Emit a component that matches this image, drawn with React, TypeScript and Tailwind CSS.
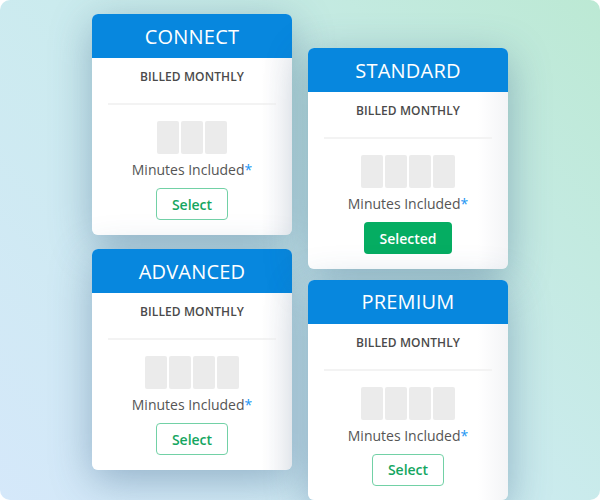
import React from "react";

type Plan = { name: string; boxes: number; selected?: boolean };

function Card({ plan }: { plan: Plan }) {
  return (
    <div className="w-[200px] rounded-[6px] overflow-hidden bg-[linear-gradient(90deg,#ffffff_0%,#ffffff_85%,#f3f4f6_100%)] shadow-[0_10px_40px_rgba(50,90,130,0.4)]">
      <div className="h-[44px] pt-[1px] bg-[#0787de] flex items-center justify-center text-white text-[20px] font-medium leading-none tracking-[0.2px]">
        {plan.name}
      </div>
      <div className="flex flex-col items-center pt-[10px] pb-[15px]">
        <div className="text-[12px] leading-[18px] font-semibold text-[#4a4a4a] tracking-[0.1px]">
          BILLED MONTHLY
        </div>
        <div className="mt-[17px] h-[2px] w-[168px] bg-[#f3f3f3]" />
        <div className="mt-[16px] flex gap-[2px]">
          {Array.from({ length: plan.boxes }).map((_, i) => (
            <div key={i} className="w-[22px] h-[33px] rounded-[2px] bg-[#ebebeb]" />
          ))}
        </div>
        <div className="mt-[6px] text-[14px] leading-[20px] text-[#555]">
          Minutes Included<span className="text-[#2196f3]">*</span>
        </div>
        {plan.selected ? (
          <button className="mt-[8px] h-[32px] w-[88px] rounded-[4px] bg-[#05ad62] text-white text-[14px] font-semibold">
            Selected
          </button>
        ) : (
          <button className="mt-[8px] h-[32px] w-[72px] rounded-[4px] border-[1.5px] border-[#72d1a6] bg-white text-[#14a65f] text-[14px] font-semibold">
            Select
          </button>
        )}
      </div>
    </div>
  );
}

export default function App() {
  return (
    <div className="w-[600px] h-[500px] bg-white">
      <div
        className="w-[600px] h-[500px] rounded-[10px] overflow-hidden bg-[linear-gradient(45deg,#d5e8fa_0%,#cbebee_50%,#bce9d4_100%)] flex gap-[16px] pl-[92px]"
        style={{ fontFamily: '"Open Sans", "Noto Sans", sans-serif' }}
      >
        <div className="flex flex-col gap-[14px] pt-[14px]">
          <Card plan={{ name: "CONNECT", boxes: 3 }} />
          <Card plan={{ name: "ADVANCED", boxes: 4 }} />
        </div>
        <div className="flex flex-col gap-[11px] pt-[48px]">
          <Card plan={{ name: "STANDARD", boxes: 4, selected: true }} />
          <Card plan={{ name: "PREMIUM", boxes: 4 }} />
        </div>
      </div>
    </div>
  );
}
